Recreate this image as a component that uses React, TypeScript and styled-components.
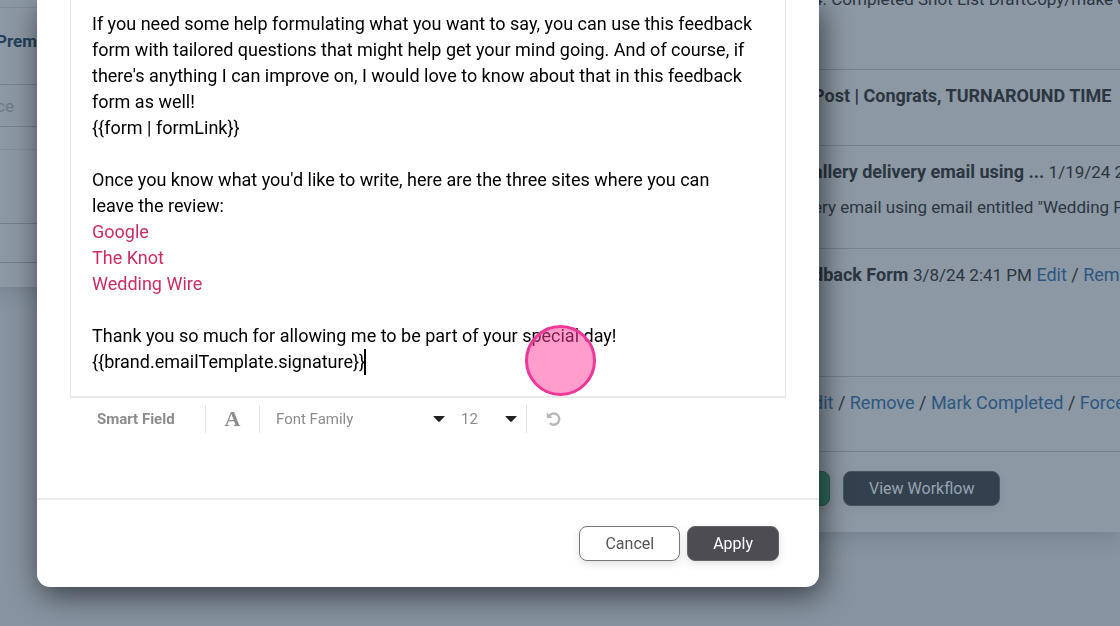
import React from "react";
import styled, { createGlobalStyle } from "styled-components";

const GlobalStyle = createGlobalStyle`
  *, *::before, *::after { box-sizing: border-box; }
  body {
    margin: 0;
    background: #88949f;
    color: #2b3641;
    font-family: Roboto, "Liberation Sans", sans-serif;
    font-size: 18px;
    line-height: 26px;
    overflow: hidden;
  }
  button, input, select { font: inherit; }
`;

const Page = styled.main`
  display: flex;
  align-items: flex-start;
  min-height: 100vh;
  background: #8793a0;
  overflow: hidden;
`;

const Card = styled.section`
  background: #8c98a4;
  box-shadow: 0 4px 20px rgba(40, 54, 68, 0.2);
`;

const SideCard = styled(Card)`
  flex: 1;
  margin-left: -4px;
  height: 287px;
`;

const SideTitle = styled.h2`
  margin: 7px 0 0;
  padding: 20px 0 0;
  height: 77px;
  border-top: 1px solid #7f8b97;
  color: #22405a;
  font-size: 17px;
  font-weight: 700;
`;

const SideInput = styled.input`
  display: block;
  width: 100%;
  height: 43px;
  padding: 0;
  border: 1px solid #75818d;
  border-width: 1px 0;
  background: transparent;
  font-size: 17px;
  &::placeholder { color: #6f7a86; opacity: 1; }
`;

const SideRow = styled.div<{ $height: number; $faint?: boolean }>`
  height: ${(p) => p.$height}px;
  border-bottom: 1px solid ${(p) => (p.$faint ? "#828e9a" : "#717d89")};
`;

const TaskCard = styled(Card)`
  flex: 0 0 320px;
  min-width: 0;
  margin-top: -14px;
`;

const Task = styled.article<{ $height: number; $flush?: boolean }>`
  min-height: ${(p) => p.$height}px;
  padding: ${(p) => (p.$flush ? 0 : 13)}px 0 0 13px;
  border-bottom: 1px solid #75818e;
  white-space: nowrap;
  overflow: hidden;
`;

const Note = styled.p`
  margin: 0;
  font-size: 17px;
`;

const TaskNote = styled(Note)`
  margin-top: 9px;
`;

const Stamp = styled.time`
  font-size: 17px;
`;

const TaskLink = styled.a`
  color: #2c5781;
  text-decoration: none;
`;

const Actions = styled.div`
  display: flex;
  gap: 13px;
  padding: 19px 0 26px;
`;

const Button = styled.button<{ $kind: "plain" | "dark" | "navy" | "green" }>`
  height: 35px;
  padding: 0 25px;
  border: 1px solid;
  border-radius: 8px;
  font-size: 16px;
  line-height: 20px;
  box-shadow: 0 3px 8px rgba(0, 0, 0, 0.12);
  ${(p) =>
    ({
      plain: "background:#fff;border-color:#77777b;color:#55555a;",
      dark: "background:#4d4c53;border-color:#66656c;color:#fff;",
      navy: "background:#33414f;border-color:#485664;color:#98a4b0;box-shadow:0 3px 8px rgba(0,0,0,.06);",
      green: "background:#2f6b5d;border-color:#285c50;padding:0 14px;",
    })[p.$kind]}
`;

const Overlay = styled.div`
  position: fixed;
  inset: 0;
  display: flex;
  align-items: flex-start;
  padding: 0 301px 0 37px;
`;

const Modal = styled.div`
  position: relative;
  flex: 1;
  min-width: 0;
  background: #fff;
  border-radius: 0 0 13px 13px;
  box-shadow: 3px 8px 30px rgba(0, 0, 0, 0.6);
`;

const ModalBody = styled.div`
  padding: 0 33px 58px;
`;

const Editor = styled.div`
  padding: 11px 31px 21px 21px;
  border: solid #e9e9ea;
  border-width: 0 1px 2px;
  color: #000;
  outline: none;
`;

const Paragraph = styled.p`
  margin: 0 0 26px;
  &:last-child { margin-bottom: 0; }
`;

const SiteLink = styled.a`
  color: #cb2d66;
  text-decoration: none;
`;

const Caret = styled.span`
  display: inline-block;
  width: 2px;
  height: 26px;
  margin-left: -1px;
  background: #000;
  vertical-align: top;
`;

const Toolbar = styled.div`
  display: flex;
  align-items: center;
  height: 42px;
  color: #8c8c8c;
  font-size: 15px;
`;

const Tool = styled.button<{ $width: number }>`
  display: flex;
  align-items: center;
  justify-content: center;
  width: ${(p) => p.$width}px;
  height: 28px;
  padding: 0;
  border: 0;
  background: none;
  color: inherit;
`;

const SmartField = styled(Tool)`
  justify-content: flex-start;
  margin-left: 27px;
  font-weight: 700;
`;

const LetterTool = styled(Tool)`
  font-family: "Liberation Serif", serif;
  font-size: 22px;
  font-weight: 700;
`;

const Divider = styled.span`
  width: 1px;
  height: 28px;
  background: #e3e3e3;
`;

const Picker = styled.label<{ $width: number }>`
  display: flex;
  align-items: center;
  width: ${(p) => p.$width}px;
  margin-left: 16px;
`;

const Select = styled.select`
  appearance: none;
  flex: 1;
  min-width: 0;
  padding: 0;
  border: 0;
  background: none;
  color: #8c8c8c;
`;

const ToolEnd = styled.div`
  display: flex;
  margin-left: 9px;
`;

const Footer = styled.footer`
  display: flex;
  justify-content: flex-end;
  gap: 7px;
  padding: 26px 40px;
  border-top: 2px solid #ebebec;
`;

const ClickMark = styled.span`
  position: absolute;
  top: 325px;
  left: 488px;
  width: 71px;
  height: 71px;
  border: 3px solid #ee3797;
  border-radius: 50%;
  background: rgba(255, 60, 155, 0.5);
  pointer-events: none;
`;

const Arrow = () => (
  <svg width="12" height="6" viewBox="0 0 12 6" aria-hidden="true">
    <path d="M1 0h10q1 0 .4.8L6.8 5.5q-.8.7-1.6 0L.6.8Q0 0 1 0z" fill="#222" />
  </svg>
);

const UndoIcon = () => (
  <svg width="16" height="16" viewBox="0 0 16 16" fill="none" aria-hidden="true">
    <path d="M3 5A5.6 5.6 0 1 1 3.8 12.2" stroke="#b8b8b8" strokeWidth="2.4" />
    <path d="M.8 1.2v5.8h5.8z" fill="#b8b8b8" />
  </svg>
);

export default function App() {
  return (
    <>
      <GlobalStyle />
      <Page>
        <SideCard>
          <SideTitle>Prem</SideTitle>
          <SideInput placeholder="ce" aria-label="Search" />
          <SideRow $height={23} $faint />
          <SideRow $height={74} />
          <SideRow $height={39} />
        </SideCard>
        <TaskCard>
          <Task $height={84} $flush>
            <Note>4. Completed Shot List DraftCopy/make o</Note>
          </Task>
          <Task $height={76}>
            <b>Post | Congrats, TURNAROUND TIME</b>
          </Task>
          <Task $height={103}>
            <b>allery delivery email using ...</b> <Stamp>1/19/24 2</Stamp>
            <TaskNote>ery email using email entitled "Wedding P</TaskNote>
          </Task>
          <Task $height={128}>
            <b>dback Form</b> <Stamp>3/8/24 2:41 PM</Stamp> <TaskLink href="#edit">Edit</TaskLink> /{" "}
            <TaskLink href="#remove">Rem</TaskLink>
          </Task>
          <Task $height={75}>
            <TaskLink href="#edit">dit</TaskLink> / <TaskLink href="#remove">Remove</TaskLink> /{" "}
            <TaskLink href="#complete">Mark Completed</TaskLink> / <TaskLink href="#force">Force</TaskLink>
          </Task>
          <Actions>
            <Button $kind="green" aria-label="Add" />
            <Button $kind="navy">View Workflow</Button>
          </Actions>
        </TaskCard>
      </Page>
      <Overlay>
        <Modal role="dialog" aria-label="Email">
          <ModalBody>
            <Editor role="textbox" aria-multiline="true" aria-label="Message" contentEditable suppressContentEditableWarning spellCheck={false}>
              <Paragraph>
                If you need some help formulating what you want to say, you can use this feedback form with tailored
                questions that might help get your mind going. And of course, if there's anything I can improve on, I
                would love to know about that in this feedback form as well!
                <br />
                {"{{form | formLink}}"}
              </Paragraph>
              <Paragraph>
                Once you know what you'd like to write, here are the three sites where you can leave the review:
                <br />
                <SiteLink href="#google">Google</SiteLink>
                <br />
                <SiteLink href="#the-knot">The Knot</SiteLink>
                <br />
                <SiteLink href="#wedding-wire">Wedding Wire</SiteLink>
              </Paragraph>
              <Paragraph>
                Thank you so much for allowing me to be part of your special day!
                <br />
                {"{{brand.emailTemplate.signature}}"}
                <Caret />
              </Paragraph>
            </Editor>
            <Toolbar>
              <SmartField $width={108}>Smart Field</SmartField>
              <Divider />
              <LetterTool $width={53} aria-label="Text style">A</LetterTool>
              <Divider />
              <Picker $width={169}>
                <Select aria-label="Font family">
                  <option>Font Family</option>
                </Select>
                <Arrow />
              </Picker>
              <Picker $width={56}>
                <Select aria-label="Font size">
                  <option>12</option>
                </Select>
                <Arrow />
              </Picker>
              <ToolEnd>
                <Divider />
                <Tool $width={53} aria-label="Undo">
                  <UndoIcon />
                </Tool>
              </ToolEnd>
            </Toolbar>
          </ModalBody>
          <Footer>
            <Button $kind="plain">Cancel</Button>
            <Button $kind="dark">Apply</Button>
          </Footer>
          <ClickMark />
        </Modal>
      </Overlay>
    </>
  );
}
